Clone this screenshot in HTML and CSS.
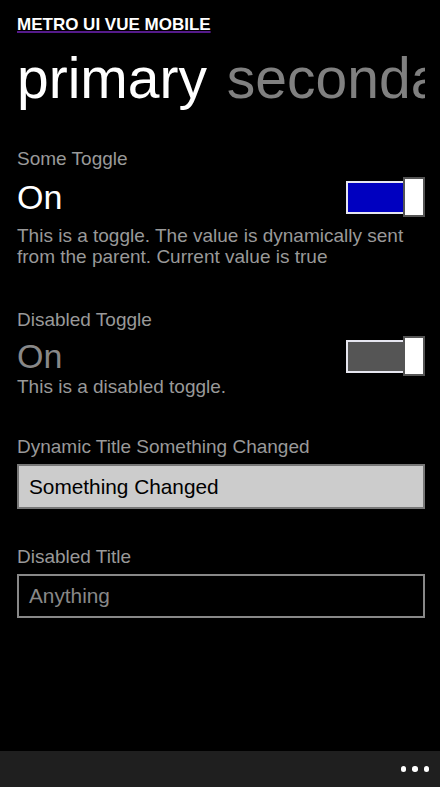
FILE: index.html
```html
<!DOCTYPE html>
<html>
<head>
<meta charset="utf-8">
<link rel="stylesheet" href="styles.css">
</head>
<body>
<div class="app">
  <main class="page">
    <a class="brand" href="#">METRO UI VUE MOBILE</a>
    <div class="pivot">
      <span class="pivot-item active">primary</span>
      <span class="pivot-item">secondary</span>
    </div>

    <section class="field first">
      <div class="label">Some Toggle</div>
      <div class="toggle-row">
        <span class="state">On</span>
        <span class="toggle on"><span class="track"></span><span class="thumb"></span></span>
      </div>
      <div class="desc">This is a toggle. The value is dynamically sent from the parent. Current value is true</div>
    </section>

    <section class="field disabled">
      <div class="label">Disabled Toggle</div>
      <div class="toggle-row">
        <span class="state">On</span>
        <span class="toggle"><span class="track"></span><span class="thumb"></span></span>
      </div>
      <div class="desc tight">This is a disabled toggle.</div>
    </section>

    <section class="field third">
      <div class="label">Dynamic Title Something Changed</div>
      <div class="textbox active">Something Changed</div>
    </section>

    <section class="field">
      <div class="label">Disabled Title</div>
      <div class="textbox disabled-box">Anything</div>
    </section>
  </main>
  <footer class="appbar">
    <span class="dots"><i></i><i></i><i></i></span>
  </footer>
</div>
</body>
</html>
```
FILE: styles.css
```css
html, body {
  margin: 0;
  padding: 0;
  background: #000;
  height: 100%;
}
body {
  font-family: "Liberation Sans", Arial, sans-serif;
  color: #fff;
}
.app {
  display: flex;
  flex-direction: column;
  height: 100vh;
}
.page {
  flex: 1;
  padding: 15px 15px 0 17px;
  overflow: hidden;
}
.brand {
  display: block;
  width: fit-content;
  color: #fff;
  font-size: 17px;
  font-weight: bold;
  line-height: 20px;
  text-decoration-line: underline;
  text-decoration-color: #551a8b;
  text-decoration-thickness: 2px;
}
.pivot {
  white-space: nowrap;
  overflow: hidden;
  font-size: 57px;
  line-height: 64px;
  height: 64px;
  margin-top: 11px;
}
.pivot-item {
  color: #808080;
  margin-right: 4px;
}
.pivot-item.active {
  color: #fff;
}
.label {
  color: #999;
  font-size: 19px;
  line-height: 22px;
}
.field {
  margin-top: 37px;
}
.field.first {
  margin-top: 38px;
}
.toggle-row {
  display: flex;
  align-items: center;
  justify-content: space-between;
  height: 42px;
  margin-top: 6px;
}
.disabled .toggle-row {
  margin-top: 4px;
}
.state {
  font-size: 34px;
  line-height: 40px;
}
.toggle {
  display: flex;
  align-items: center;
  width: 79px;
  height: 40px;
}
.track {
  box-sizing: border-box;
  width: 60px;
  height: 33px;
  border: 2px solid #e6e6f0;
  background: #555;
}
.toggle.on .track {
  background: #0000c0;
}
.thumb {
  box-sizing: border-box;
  width: 22px;
  height: 40px;
  margin-left: -3px;
  background: #fff;
  border: 2px solid #555;
}
.desc {
  color: #999;
  font-size: 19px;
  line-height: 21px;
  margin-top: 7px;
}
.desc.tight {
  margin-top: -1px;
}
.field.disabled {
  margin-top: 42px;
}
.field.third {
  margin-top: 39px;
}
.disabled .state {
  color: #888;
}
.textbox {
  box-sizing: border-box;
  height: 45px;
  margin-top: 6px;
  padding: 0 10px;
  display: flex;
  align-items: center;
  font-size: 20.8px;
  border: 2px solid #777;
}
.textbox.active {
  background: #ccc;
  color: #000;
}
.textbox.disabled-box {
  height: 44px;
  margin-top: 6px;
  background: #000;
  color: #888;
  border-color: #888;
}
.appbar {
  height: 36px;
  background: #1f1f1f;
  display: flex;
  justify-content: flex-end;
  align-items: center;
  padding-right: 11px;
}
.dots {
  display: flex;
  gap: 6px;
}
.dots i {
  display: block;
  width: 5.5px;
  height: 5.5px;
  border-radius: 50%;
  background: #fff;
}
```
